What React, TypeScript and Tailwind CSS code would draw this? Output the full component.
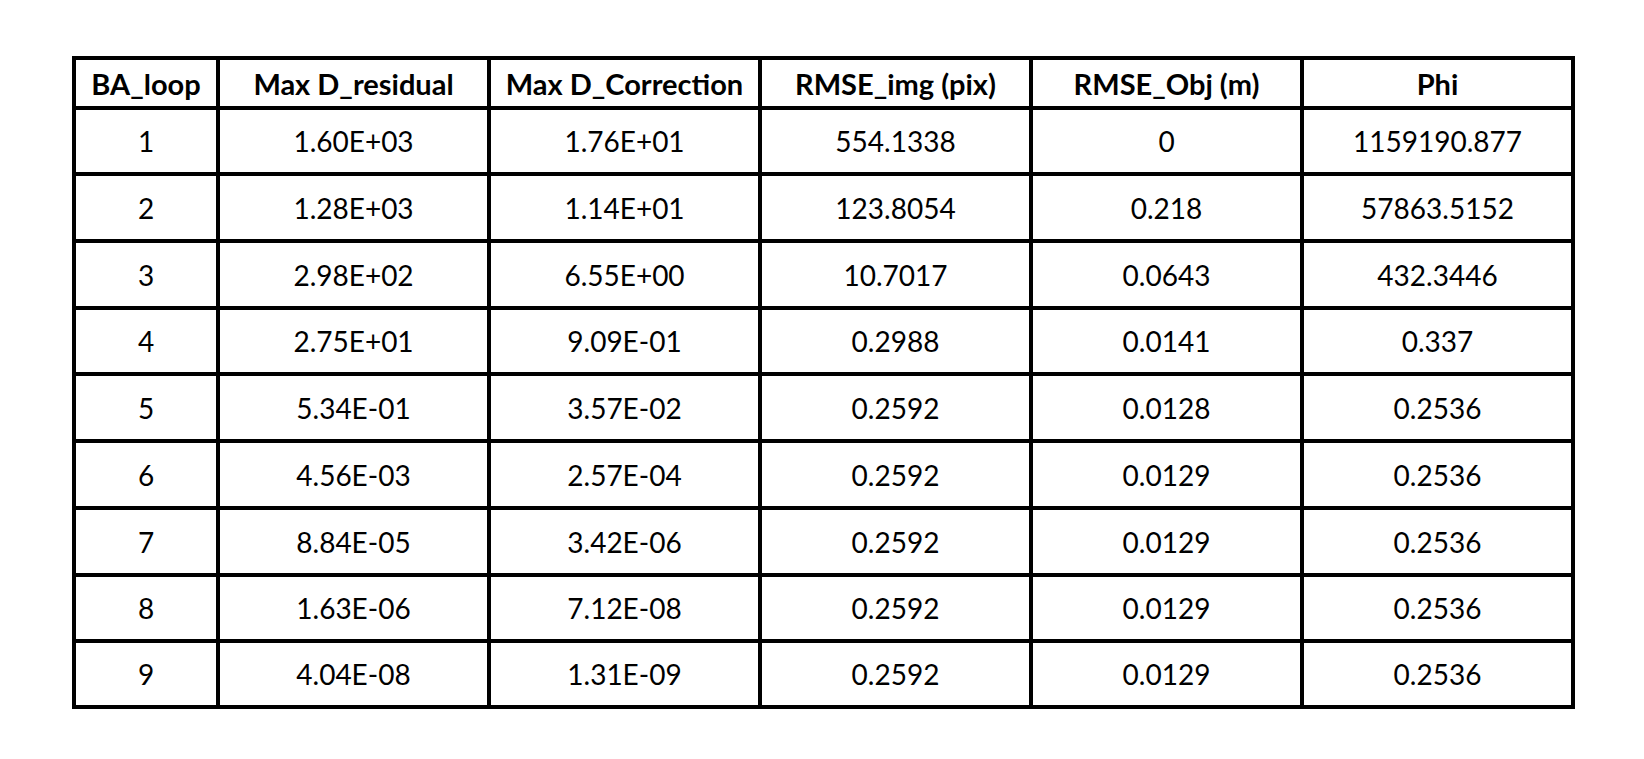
const HEADERS = ["BA_loop", "Max D_residual", "Max D_Correction", "RMSE_img (pix)", "RMSE_Obj (m)", "Phi"];

const ROWS: string[][] = [
  ["1", "1.60E+03", "1.76E+01", "554.1338", "0", "1159190.877"],
  ["2", "1.28E+03", "1.14E+01", "123.8054", "0.218", "57863.5152"],
  ["3", "2.98E+02", "6.55E+00", "10.7017", "0.0643", "432.3446"],
  ["4", "2.75E+01", "9.09E-01", "0.2988", "0.0141", "0.337"],
  ["5", "5.34E-01", "3.57E-02", "0.2592", "0.0128", "0.2536"],
  ["6", "4.56E-03", "2.57E-04", "0.2592", "0.0129", "0.2536"],
  ["7", "8.84E-05", "3.42E-06", "0.2592", "0.0129", "0.2536"],
  ["8", "1.63E-06", "7.12E-08", "0.2592", "0.0129", "0.2536"],
  ["9", "4.04E-08", "1.31E-09", "0.2592", "0.0129", "0.2536"],
];

export default function App() {
  return (
    <div className="w-[1644px] h-[759px] bg-white pt-[56px] pl-[72px] font-['Lato','Open_Sans',sans-serif] text-black">
      <div className="inline-grid grid-cols-[140px_repeat(5,267px)] grid-rows-[46px_62px_63px_63px_62px_63px_63px_63px_62px_62px] gap-[4px] p-[4px] bg-black">
        {HEADERS.map((h) => (
          <div key={h} className="bg-white flex items-center justify-center text-[29px] leading-none font-bold whitespace-nowrap">
            {h}
          </div>
        ))}
        {ROWS.map((row, i) =>
          row.map((cell, j) => (
            <div key={`${i}-${j}`} className="bg-white flex items-center justify-center text-[28px] leading-none">
              {cell}
            </div>
          ))
        )}
      </div>
    </div>
  );
}
